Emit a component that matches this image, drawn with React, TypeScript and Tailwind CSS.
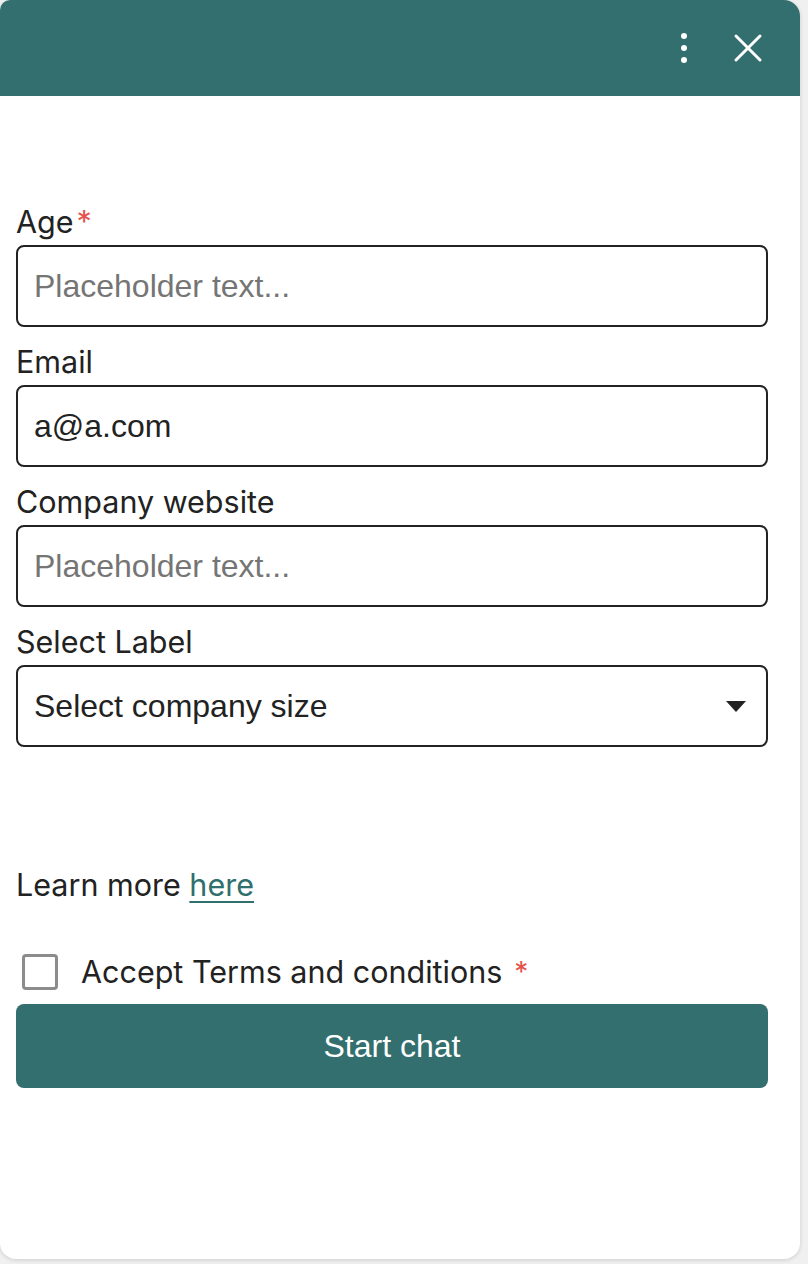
import React from "react";

const labelFont = { fontFamily: "Inter, 'Liberation Sans', sans-serif" };
const fieldFont = { fontFamily: "'Liberation Sans', Arial, sans-serif" };

const fields = [
  { label: "Age", required: true, value: "", placeholder: "Placeholder text..." },
  { label: "Email", required: false, value: "a@a.com", placeholder: "Placeholder text..." },
  { label: "Company website", required: false, value: "", placeholder: "Placeholder text..." },
];

function Label({ text, required }: { text: string; required?: boolean }) {
  return (
    <div className="text-[30.5px] leading-[38px] text-[#222222] mb-[4px]" style={labelFont}>
      {text}
      {required && <span className="text-[#e5534b] ml-[3px]">*</span>}
    </div>
  );
}

export default function App() {
  return (
    <div className="w-[808px] h-[1264px] bg-[#f0f0f0]">
      <div className="w-[800px] h-[1259px] bg-white rounded-[16px] rounded-tl-[10px] overflow-hidden shadow-[0_1px_4px_rgba(0,0,0,0.15)] flex flex-col">
        <div className="h-[96px] bg-[#336f6e] flex items-center justify-end pr-[37px] gap-[44px] shrink-0">
          <svg width="10" height="32" viewBox="0 0 10 32" fill="white">
            <circle cx="5" cy="4" r="3" />
            <circle cx="5" cy="16" r="3" />
            <circle cx="5" cy="28" r="3" />
          </svg>
          <svg width="30" height="30" viewBox="0 0 30 30" stroke="white" strokeWidth="3" strokeLinecap="round">
            <line x1="3" y1="3" x2="27" y2="27" />
            <line x1="27" y1="3" x2="3" y2="27" />
          </svg>
        </div>

        <div className="px-[16px] pt-[107px] w-[784px]">
          {fields.map((f) => (
            <div key={f.label} className="mb-[16px]">
              <Label text={f.label} required={f.required} />
              <input
                className="w-[752px] h-[82px] border-2 border-[#222222] rounded-[8px] px-[16px] text-[32px] text-[#222222] placeholder:text-[#757575] outline-none"
                style={fieldFont}
                placeholder={f.placeholder}
                defaultValue={f.value}
              />
            </div>
          ))}
          <div>
            <Label text="Select Label" />
            <div
              className="w-[752px] h-[82px] border-2 border-[#222222] rounded-[8px] pl-[16px] pr-[20px] flex items-center justify-between text-[32px] text-[#222222]"
              style={fieldFont}
            >
              <span>Select company size</span>
              <svg width="20" height="11" viewBox="0 0 20 11" fill="#222222">
                <polygon points="0,0 20,0 10,11" />
              </svg>
            </div>
          </div>

          <div className="mt-[119px] text-[30.5px] leading-[38px] text-[#222222]" style={labelFont}>
            Learn more{" "}
            <a href="#" className="text-[#2f6f6d] underline decoration-2 underline-offset-[5px]">
              here
            </a>
          </div>

          <div className="mt-[49px] flex items-center h-[38px]">
            <div className="w-[36px] h-[36px] ml-[6px] border-[3px] border-[#8c8c8c] rounded-[4px] shrink-0" />
            <span className="ml-[23px] text-[30.5px] leading-[38px] text-[#222222]" style={labelFont}>
              Accept Terms and conditions
            </span>
            <span className="ml-[12px] text-[28px] leading-[38px] text-[#e5534b]" style={labelFont}>
              *
            </span>
          </div>

          <button
            className="mt-[13px] w-[752px] h-[84px] bg-[#336f6e] rounded-[8px] text-white text-[32px]"
            style={fieldFont}
          >
            Start chat
          </button>
        </div>
      </div>
    </div>
  );
}
